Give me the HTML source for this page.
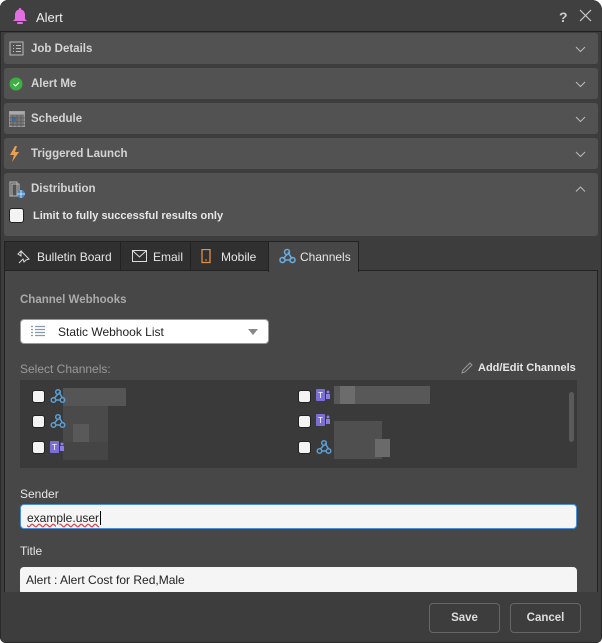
<!DOCTYPE html>
<html><head><style>
*{box-sizing:border-box;margin:0;padding:0}
body{width:602px;height:643px;background:#fff;font-family:"Liberation Sans",sans-serif;font-size:12px;color:#ddd;overflow:hidden}
.dlg{position:absolute;left:0;top:0;width:602px;height:643px;background:#3d3d3d;border-radius:8px 10px 6px 6px;overflow:hidden;box-shadow:inset 0 0 0 1px #2a2a2a}
.tb{position:absolute;left:0;top:0;width:602px;height:32px;background:#404040;border-bottom:1px solid #222}
.row{position:absolute;left:4px;width:594px;background:#525252;border-radius:3px;color:#d4d4d4;font-weight:bold;font-size:11.5px}
.row span.t{position:absolute;left:27px;top:10px}
.chev{position:absolute;right:12px;top:12px}
.ic{position:absolute;left:5px;top:8px}
.cb{position:absolute;width:13px;height:13px;background:#f3f3f3;border:1px solid #222;border-radius:3px}
.tab{position:absolute;top:241px;height:30px;background:#303030;border:1px solid #222;color:#e6e6e6;font-size:12px;padding-top:8px}
.pix{position:absolute}
.btn{position:absolute;top:603px;width:71px;height:30px;border:1px solid #666;border-radius:4px;color:#ddd;text-align:center;line-height:28px;font-weight:bold;font-size:11.5px}
.inp{position:absolute;left:20px;width:557px;height:25px;background:#f5f5f5;border-radius:4px;color:#222;font-size:12px;padding:6px 6px}
</style></head><body><div class="dlg">
<div class="tb">
<svg style="position:absolute;left:12px;top:7px" width="16" height="17" viewBox="0 0 16 17"><path d="M8 1a1 1 0 0 1 1 1.5C11.5 3 13 5 13 8v4l2 2H1l2-2V8c0-3 1.5-5 4-5.5A1 1 0 0 1 8 1z" fill="#e070e0"/><rect x="5" y="15" width="6" height="2" rx="1" fill="#e070e0"/></svg>
<span style="position:absolute;left:36px;top:10px;font-size:13px;color:#eee">Alert</span>
<span style="position:absolute;left:559px;top:9px;font-weight:bold;font-size:14px;color:#ccc">?</span>
<svg style="position:absolute;left:579px;top:9px" width="13" height="13"><path d="M1 1L12 12M12 1L1 12" stroke="#ccc" stroke-width="1.2"/></svg>
</div>
<div class="row" style="top:33px;height:31px"><svg class="ic" width="15" height="15"><rect x="1" y="1" width="13" height="13" fill="none" stroke="#bbb"/><path d="M4 4.5h1M7 4.5h5M4 7.5h1M7 7.5h5M4 10.5h1M7 10.5h5" stroke="#bbb"/></svg><span class="t">Job Details</span><svg class="chev" width="11" height="8"><path d="M1 2l4.5 4.5L10 2" fill="none" stroke="#bbb"/></svg></div>
<div class="row" style="top:68px;height:31px"><svg class="ic" width="15" height="15" style="top:9px"><circle cx="7" cy="7" r="6.5" fill="#3cb043"/><path d="M4.5 7l2 2 3.5-3.5" stroke="#fff" fill="none"/></svg><span class="t">Alert Me</span><svg class="chev" width="11" height="8"><path d="M1 2l4.5 4.5L10 2" fill="none" stroke="#bbb"/></svg></div>
<div class="row" style="top:103px;height:31px"><svg class="ic" width="16" height="16"><rect x="0.5" y="0.5" width="15" height="15" fill="#777" stroke="#999"/><rect x="0.5" y="0.5" width="15" height="3" fill="#aaa"/><rect x="3" y="6" width="4" height="4" fill="#3a6ea8"/><path d="M0 7h16M0 10.5h16M0 13.5h16M4 4v12M8 4v12M12 4v12" stroke="#555" stroke-width=".6"/></svg><span class="t">Schedule</span><svg class="chev" width="11" height="8"><path d="M1 2l4.5 4.5L10 2" fill="none" stroke="#bbb"/></svg></div>
<div class="row" style="top:138px;height:31px"><svg class="ic" width="12" height="16"><path d="M6 0L1 9h4l-2 7 7-10H6l2-6z" fill="#e8a050"/></svg><span class="t">Triggered Launch</span><svg class="chev" width="11" height="8"><path d="M1 2l4.5 4.5L10 2" fill="none" stroke="#bbb"/></svg></div>
<div class="row" style="top:173px;height:63px"><svg class="ic" width="18" height="18"><rect x="1" y="1" width="7" height="14" fill="none" stroke="#bbb"/><rect x="3" y="3" width="7" height="12" fill="none" stroke="#bbb"/><circle cx="12" cy="13" r="4" fill="#4a8cc8"/><path d="M8 13h8M12 9v8" stroke="#cde"/></svg><span class="t">Distribution</span><svg class="chev" width="11" height="8"><path d="M1 6.5L5.5 2 10 6.5" fill="none" stroke="#bbb"/></svg>
<div class="cb" style="left:5px;top:35px;width:15px;height:15px"></div><span style="position:absolute;left:29px;top:37px;font-size:11px;color:#e6e6e6">Limit to fully successful results only</span></div>
<div style="position:absolute;left:4px;top:270px;width:594px;height:326px;background:#474747;border:1px solid #222;border-bottom:none"></div>
<div class="tab" style="left:4px;width:117px"><svg style="position:absolute;left:10px;top:7px" width="16" height="16"><path d="M6 2l8 8-3 1-2 2-1-3-4 4M6 2L3 5l3 2z" fill="none" stroke="#ddd"/></svg><span style="position:absolute;left:32px">Bulletin Board</span></div>
<div class="tab" style="left:120px;width:71px"><svg style="position:absolute;left:11px;top:8px" width="16" height="13"><rect x=".5" y=".5" width="14" height="11" fill="none" stroke="#ddd"/><path d="M1 1l6.5 6L14 1" fill="none" stroke="#ddd"/></svg><span style="position:absolute;left:32px">Email</span></div>
<div class="tab" style="left:190px;width:79px"><svg style="position:absolute;left:10px;top:7px" width="10" height="15"><rect x="1" y=".5" width="8" height="13" fill="none" stroke="#e0904a" stroke-width="1.3"/><path d="M4 11h2" stroke="#e0904a"/></svg><span style="position:absolute;left:30px">Mobile</span></div>
<div class="tab" style="left:268px;width:91px;height:31px;background:#474747;border-bottom:none"><svg style="position:absolute;left:10px;top:6px" width="18" height="17"><g fill="none" stroke="#6aa8d8" stroke-width="1.6"><circle cx="8" cy="4" r="2.5"/><circle cx="3.5" cy="12" r="2.5"/><circle cx="13.5" cy="12" r="2.5"/><path d="M8 6.5L4 11M6 12h5M9 4l4 7"/></g></svg><span style="position:absolute;left:31px">Channels</span></div>
<span style="position:absolute;left:20px;top:294px;color:#aaa;font-weight:bold;font-size:11.5px">Channel Webhooks</span>
<div style="position:absolute;left:20px;top:319px;width:249px;height:25px;background:#fff;border-radius:4px;border:1px solid #999"><svg style="position:absolute;left:10px;top:5px" width="14" height="13"><path d="M0 1.5h2M4 1.5h10M0 4.5h2M4 4.5h10M0 7.5h2M4 7.5h10M0 10.5h2M4 10.5h10" stroke="#8899aa" stroke-width="1.2"/></svg><span style="position:absolute;left:37px;top:5px;color:#222">Static Webhook List</span><svg style="position:absolute;left:227px;top:9px" width="10" height="6"><path d="M0 0h10L5 6z" fill="#888"/></svg></div>
<span style="position:absolute;left:20px;top:362px;color:#999">Select Channels:</span>
<svg style="position:absolute;left:460px;top:361px" width="14" height="14"><path d="M2 12l1-3 7-7 2 2-7 7z" fill="none" stroke="#999"/></svg>
<span style="position:absolute;left:478px;top:362px;color:#e6e6e6;font-weight:bold;font-size:11px">Add/Edit Channels</span>
<div style="position:absolute;left:20px;top:380px;width:557px;height:88px;background:#3a3a3a;overflow:hidden">
<div style="position:absolute;right:3px;top:12px;width:5px;height:50px;background:#5a5a5a;border-radius:3px"></div>
<div class="cb" style="left:12px;top:10px"></div><div class="cb" style="left:12px;top:35px"></div><div class="cb" style="left:12px;top:61px"></div>
<div class="cb" style="left:278px;top:10px"></div><div class="cb" style="left:278px;top:35px"></div><div class="cb" style="left:278px;top:61px"></div>
<div class="pix" style="left:43px;top:8px;width:63px;height:18px;background:#555"></div>
<div class="pix" style="left:43px;top:26px;width:45px;height:36px;background:#4a4a4a"></div>
<div class="pix" style="left:53px;top:44px;width:16px;height:18px;background:#595959"></div>
<div class="pix" style="left:43px;top:62px;width:45px;height:18px;background:#454545"></div>
<div class="pix" style="left:314px;top:6px;width:96px;height:18px;background:#585858"></div>
<div class="pix" style="left:320px;top:6px;width:15px;height:18px;background:#6c6c6c"></div>
<div class="pix" style="left:314px;top:41px;width:48px;height:38px;background:#4f4f4f"></div>
<div class="pix" style="left:355px;top:59px;width:15px;height:18px;background:#6a6a6a"></div>
<svg style="position:absolute;left:30px;top:8px" width="16" height="16"><g fill="none" stroke="#5b9fd4" stroke-width="1.5"><circle cx="8" cy="4" r="2.3"/><circle cx="3.5" cy="12" r="2.3"/><circle cx="12.5" cy="12" r="2.3"/><path d="M8 6L4 10.5M6 12h4M9 4l3.5 6"/></g></svg>
<svg style="position:absolute;left:30px;top:33px" width="16" height="16"><g fill="none" stroke="#5b9fd4" stroke-width="1.5"><circle cx="8" cy="4" r="2.3"/><circle cx="3.5" cy="12" r="2.3"/><circle cx="12.5" cy="12" r="2.3"/><path d="M8 6L4 10.5M6 12h4M9 4l3.5 6"/></g></svg>
<svg style="position:absolute;left:296px;top:59px" width="16" height="16"><g fill="none" stroke="#5b9fd4" stroke-width="1.5"><circle cx="8" cy="4" r="2.3"/><circle cx="3.5" cy="12" r="2.3"/><circle cx="12.5" cy="12" r="2.3"/><path d="M8 6L4 10.5M6 12h4M9 4l3.5 6"/></g></svg>
<svg style="position:absolute;left:30px;top:60px" width="16" height="14"><rect x="0" y="1" width="9" height="12" rx="1" fill="#7b6fd6"/><text x="2" y="10" font-size="8" fill="#fff" font-family="Liberation Sans">T</text><circle cx="12" cy="4" r="1.5" fill="#8a7fe0"/><rect x="10" y="6" width="4" height="5" fill="#8a7fe0"/></svg>
<svg style="position:absolute;left:296px;top:8px" width="16" height="14"><rect x="0" y="1" width="9" height="12" rx="1" fill="#7b6fd6"/><text x="2" y="10" font-size="8" fill="#fff" font-family="Liberation Sans">T</text><circle cx="12" cy="4" r="1.5" fill="#8a7fe0"/><rect x="10" y="6" width="4" height="5" fill="#8a7fe0"/></svg>
<svg style="position:absolute;left:296px;top:33px" width="16" height="14"><rect x="0" y="1" width="9" height="12" rx="1" fill="#7b6fd6"/><text x="2" y="10" font-size="8" fill="#fff" font-family="Liberation Sans">T</text><circle cx="12" cy="4" r="1.5" fill="#8a7fe0"/><rect x="10" y="6" width="4" height="5" fill="#8a7fe0"/></svg>
</div>
<span style="position:absolute;left:20px;top:487px;color:#e6e6e6">Sender</span>
<div class="inp" style="top:504px;border:1px solid #4a90d9"><span style="text-decoration:underline wavy #e04040">example.user</span><span style="border-left:1px solid #000;margin-left:1px"></span></div>
<span style="position:absolute;left:20px;top:544px;color:#e6e6e6">Title</span>
<div class="inp" style="top:567px;height:28px">Alert : Alert Cost for Red,Male</div>
<div style="position:absolute;left:1px;top:592px;width:600px;height:50px;background:#3d3d3d"></div>
<div class="btn" style="left:429px">Save</div>
<div class="btn" style="left:510px">Cancel</div>
</div></body></html>
